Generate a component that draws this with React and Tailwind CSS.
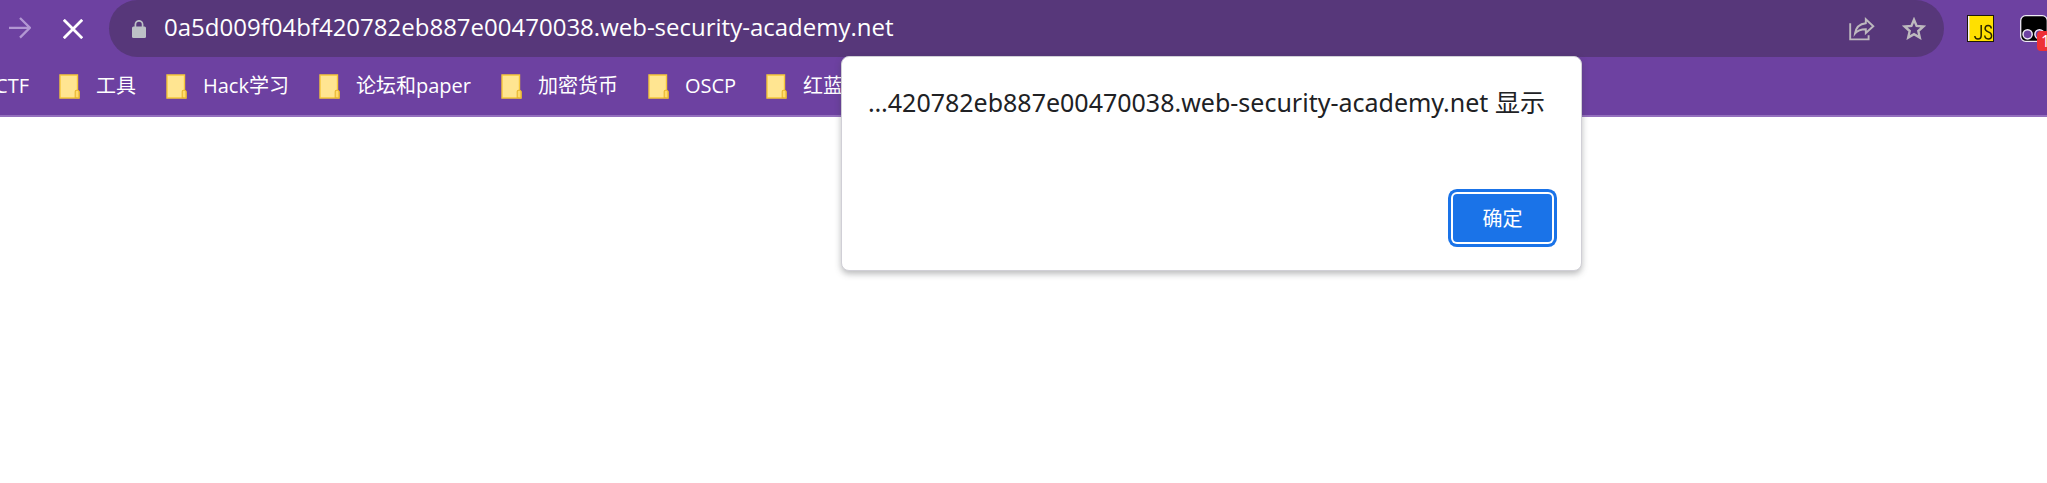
const bookmarks = ['工具', 'Hack学习', '论坛和paper', '加密货币', 'OSCP', '红蓝对抗'];

function FolderIcon() {
  return (
    <svg width="21" height="25" viewBox="0 0 21 25" className="shrink-0" aria-hidden="true">
      <path d="M1 1h17.5v17h1.5v6H1z" fill="#ffe591" stroke="#f5c73a" strokeWidth="1.4" />
      <path d="M16.2 23.5v-6q0-1.3 1.3-1.3h1.2q1.3 0 1.3 1.3v5.8q0 .7-.8.7z" fill="#ffdb6b" stroke="#e8b52c" strokeWidth="1.1" />
    </svg>
  );
}

function ArrowIcon() {
  return (
    <svg width="22" height="22" viewBox="0 0 22 22" fill="none" stroke="#b297d3" strokeWidth="2.3" aria-hidden="true">
      <path d="M0 10.8h20.5M11 1l9.8 9.8L11 20.6" />
    </svg>
  );
}

function StopIcon() {
  return (
    <svg width="20" height="20" viewBox="0 0 20 20" fill="none" stroke="#fff" strokeWidth="2.8" aria-hidden="true">
      <path d="M.8.8l18.4 18.4M19.2.8L.8 19.2" />
    </svg>
  );
}

function LockIcon() {
  return (
    <svg width="14" height="18" viewBox="0 0 14 18" aria-hidden="true">
      <path d="M3.4 7.5V4.4a3.6 3.6 0 0 1 7.2 0v3.1" fill="none" stroke="#bdc1c6" strokeWidth="1.7" />
      <rect x="0" y="6.4" width="14" height="11.6" rx="1.5" fill="#bdc1c6" />
    </svg>
  );
}

function ShareIcon() {
  return (
    <svg width="26" height="24" viewBox="0 0 26 24" fill="none" stroke="#bdb9be" strokeWidth="1.9" aria-hidden="true">
      <path d="M1.2 6.3v16.1h18.4v-4.2" />
      <path d="M16.8 2.2l7.5 7-7.5 6.8v-3.8c-4.6 0-8.3 1.1-10.8 4.3.8-5.4 4.3-9.6 10.8-10.3z" strokeLinejoin="miter" />
    </svg>
  );
}

function StarIcon() {
  return (
    <svg width="24" height="23" viewBox="0 0 24 23" fill="none" stroke="#bdb9be" strokeWidth="2.4" aria-hidden="true">
      <path d="M12 2.7l2.6 6.2 6.8.6-5.1 4.5 1.5 6.6-5.8-3.5-5.8 3.5 1.5-6.6-5.1-4.5 6.8-.6z" />
    </svg>
  );
}

function ScriptIcon() {
  return (
    <svg width="27" height="27" viewBox="0 0 27 27" aria-hidden="true">
      <rect x=".5" y=".5" width="26" height="26" fill="#ffe000" stroke="#1c1808" />
      <path d="M1.7 1v25" stroke="#f4efff" strokeWidth="1.4" />
      <path d="M14.2 10v10.2q0 3.8-3.2 3.8-3 0-3.2-3M24.300 13.500q-.2-3-3.200-3-3 0-3 3.100 0 2.200 3.100 3.300 3.400 1.200 3.400 3.900 0 3.200-3.300 3.200-3.400 0-3.500-3.400" fill="none" stroke="#2b2600" strokeWidth="1.5" />
    </svg>
  );
}

function MonkeyIcon() {
  return (
    <svg width="28" height="27" viewBox="0 0 28 27" aria-hidden="true">
      <rect x=".7" y=".7" width="26.6" height="25.6" rx="5" fill="#000" stroke="#efeaf6" strokeWidth="1.3" />
      <circle cx="7.6" cy="19.3" r="4.6" fill="#6d41a1" stroke="#efeaf6" strokeWidth="1.5" />
      <circle cx="19.5" cy="19.3" r="4.6" fill="#6d41a1" stroke="#efeaf6" strokeWidth="1.5" />
    </svg>
  );
}

export default function App() {
  return (
    <div className="relative min-h-screen overflow-hidden bg-white font-['Open_Sans','Noto_Sans_CJK_SC',sans-serif]">
      <header className="border-b-2 border-[#9370bd] bg-[#6d41a1] text-white">
        <div className="flex h-[57px] items-center">
          <button type="button" aria-label="Forward" className="ml-[9px] shrink-0 pb-[2px]"><ArrowIcon /></button>
          <button type="button" aria-label="Stop loading" className="ml-8 shrink-0"><StopIcon /></button>
          <div className="ml-[26px] flex h-full min-w-0 flex-1 items-center rounded-full bg-[#57377a] pl-[23px] pr-[18px]">
            <button type="button" aria-label="Site information" className="shrink-0"><LockIcon /></button>
            <input
              type="text"
              aria-label="Address"
              defaultValue="0a5d009f04bf420782eb887e00470038.web-security-academy.net"
              className="ml-[18px] h-9 min-w-0 flex-1 bg-transparent pb-[3px] text-[24px] outline-none"
            />
            <button type="button" aria-label="Share" className="shrink-0"><ShareIcon /></button>
            <button type="button" aria-label="Bookmark" className="ml-[27px] shrink-0"><StarIcon /></button>
          </div>
          <button type="button" aria-label="JS extension" className="ml-[23px] shrink-0"><ScriptIcon /></button>
          <button type="button" aria-label="Script manager" className="relative ml-[26px] w-[27px] shrink-0">
            <MonkeyIcon />
            <span className="absolute -right-2 top-4 flex h-5 w-[18px] items-center rounded-sm bg-[#ee3035] pl-1 text-base leading-none">1</span>
          </button>
        </div>
        <nav aria-label="Bookmarks" className="flex h-[58px] items-center gap-[30px] overflow-hidden whitespace-nowrap text-[20px] leading-7">
          <a href="#ctf" className="flex w-[29px] shrink-0 justify-end overflow-hidden">CTF</a>
          {bookmarks.map((name) => (
            <a key={name} href={`#${name}`} className="flex shrink-0 items-center gap-4">
              <FolderIcon />
              {name}
            </a>
          ))}
        </nav>
      </header>

      <div
        role="dialog"
        aria-labelledby="dialog-title"
        className="absolute left-[841px] top-14 flex w-[741px] flex-col rounded-lg border border-[#d0cfd6] bg-white px-[26px] pb-7 pt-[27px] shadow-[0_3px_6px_rgba(60,64,67,0.35)]"
      >
        <h1 id="dialog-title" className="whitespace-nowrap font-['Noto_Sans','Noto_Sans_CJK_SC',sans-serif] text-[25px] font-normal leading-9 text-[#202124]">
          …420782eb887e00470038.web-security-academy.net 显示
        </h1>
        <button
          type="button"
          className="mr-[3px] mt-[74px] h-12 w-[99px] self-end rounded bg-[#1a73e8] pt-[2px] text-[20px] text-white ring-3 ring-[#1a73e8] ring-offset-2 ring-offset-white"
        >
          确定
        </button>
      </div>
    </div>
  );
}
